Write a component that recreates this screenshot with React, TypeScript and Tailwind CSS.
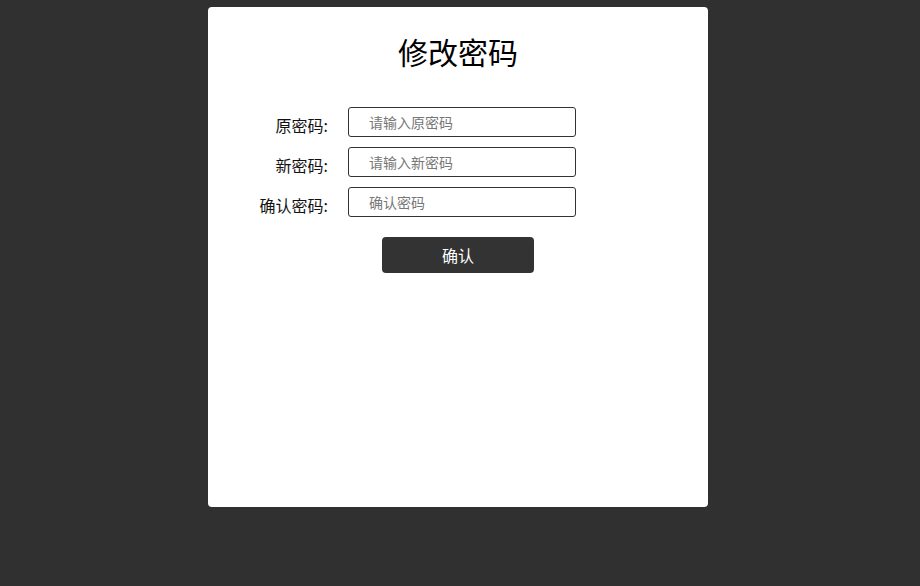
export default function App() {
  const fields = [
    { label: "原密码:", placeholder: "请输入原密码" },
    { label: "新密码:", placeholder: "请输入新密码" },
    { label: "确认密码:", placeholder: "确认密码" },
  ]

  return (
    <div
      className="min-h-[586px] w-full bg-[#303030] pt-[7px]"
      style={{ fontFamily: '"Noto Sans CJK SC", "Noto Sans", sans-serif' }}
    >
      <div className="ml-[208px] h-[500px] w-[500px] rounded-[4px] bg-white">
        <h1 className="pt-[24px] text-center text-[30px] leading-[40px] text-black">
          修改密码
        </h1>
        <div className="mt-[36px] flex flex-col gap-[10px]">
          {fields.map((f) => (
            <div key={f.label} className="flex items-center">
              <label className="w-[120px] pt-[5px] text-right text-[16px] leading-[20px] text-[#111]">
                {f.label}
              </label>
              <input
                type="password"
                placeholder={f.placeholder}
                className="ml-[20px] h-[30px] w-[228px] rounded-[3px] border border-[#333] pl-[20px] text-[14px] outline-none placeholder:text-[#777]"
              />
            </div>
          ))}
        </div>
        <div className="mt-[20px] flex justify-center">
          <button className="h-[36px] w-[152px] rounded-[4px] bg-[#333] text-[16px] text-white">
            确认
          </button>
        </div>
      </div>
    </div>
  )
}
